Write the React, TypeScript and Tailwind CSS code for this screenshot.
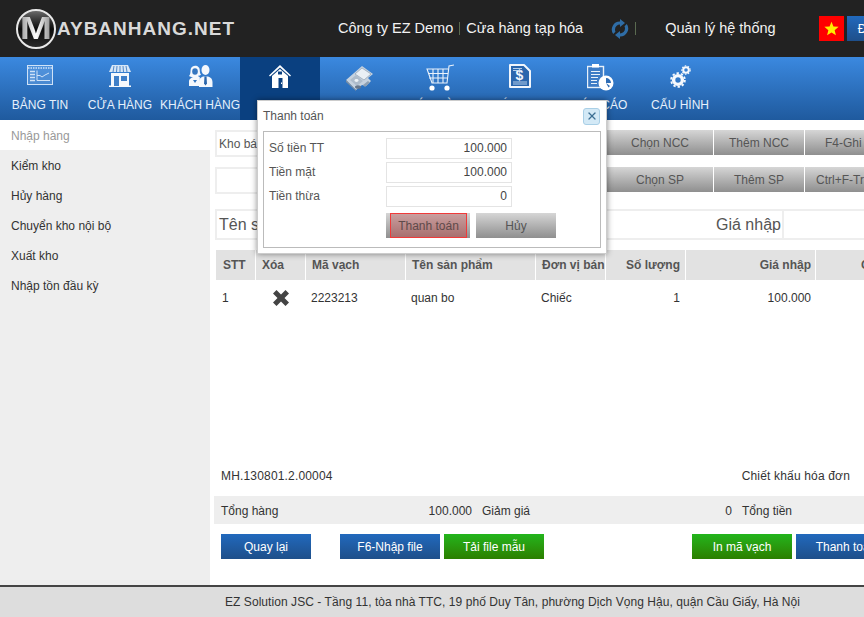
import React from 'react';
import { X } from 'lucide-react';

const font = { fontFamily: '"Liberation Sans", Arial, sans-serif' };

const greyBtn = 'flex h-[25px] items-center justify-center bg-gradient-to-b from-[#d6d6d6] to-[#8f8f8f] text-xs text-[#555]';
const blueBtn = 'flex h-[25px] items-center justify-center bg-gradient-to-b from-[#2169bd] to-[#1e4f8a] text-xs text-white';
const greenBtn = 'flex h-[25px] items-center justify-center bg-gradient-to-b from-[#22b51c] to-[#2b7f00] text-xs text-white';

const IconBoard = () => (
  <svg width="26" height="20" viewBox="0 0 26 20" fill="none" stroke="#cfe2f7" strokeWidth="1">
    <rect x="0.500" y="0.500" width="25" height="19" fill="#7fb2ea" fillOpacity="0.35" />
    <path d="M1 3h24" strokeWidth="1.500" strokeDasharray="1.500 1" />
    <path d="M3 6.500h5M3 9.500h5M3 12.500h5M3 15.500h5" strokeWidth="1.300" />
    <path d="M10 5.500v10M10 10.500h3l2 1.500 3-2 4-2M10 15.500h13" />
  </svg>
);

const IconStore = () => (
  <svg width="22" height="22" viewBox="0 0 22 22" fill="#f4f8fd">
    <path d="M3 0h16l3 7H0z" fill="#d7e6f6" />
    <path d="M5 1 4 7M8 1l-.500 6M11 1v6M14 1l.500 6M17 1l1 6" stroke="#4f88c9" strokeWidth="1" />
    <path d="M2 8h18v13H2z" />
    <path d="M0 20.500h22V22H0z" />
    <path d="M5 11h5v10H5z" fill="#3f7fc8" />
    <path d="M12 11h6v5h-6z" fill="#3f7fc8" />
  </svg>
);

const IconCustomers = () => (
  <svg width="25" height="22" viewBox="0 0 25 22">
    <path d="M7 0.800c3 0 5 2 4.800 5 0 2 .7 3 1.200 4-1 1-2 1.200-3 1 .2.700 1 1 1.800 1.400V21H1v-5c0-2 2-3 4-4-1 .2-2.500 0-4-1 1-1 1.500-3 1.500-5C2.500 3 4 .8 7 .8z" fill="#f4f8fd" />
    <ellipse cx="7" cy="6.500" rx="2.800" ry="3.200" fill="#3476c0" />
    <path d="M5 15h4l-2 3z" fill="#3476c0" />
    <ellipse cx="17.500" cy="5" rx="4" ry="5" fill="#f4f8fd" />
    <path d="M11 22v-5c0-3 2-5 4-5.500h5c2.500.5 4.500 2.500 4.500 5.500v5z" fill="#f4f8fd" />
    <path d="M16.500 11.500h2l.5 7-1.500 2-1.500-2z" fill="#2b66ab" />
  </svg>
);

const IconHome = () => (
  <svg width="22" height="23" viewBox="0 0 22 23" fill="#fff">
    <path d="M11 0 0 10.500l1 1L11 2.500l10 9 1-1z" />
    <path d="M11 4 3 11v12h16V11z" />
    <path d="M9.500 13h4v10h-4z" fill="#0a4080" />
    <path d="M9 6.500h4v3H9z" fill="#0a4080" />
    <path d="M12 17.500h1v1.500h-1z" fill="#fff" />
  </svg>
);

const IconMoney = () => (
  <svg width="29" height="27" viewBox="0 0 29 27">
    <path d="M0 15 16 1l11 8-5 4 3 3-5 5-4-1-6 5z" fill="#c6d2df" />
    <path d="M0 15v2l10 9v-1z" fill="#7f8f9f" />
    <path d="M16 3l9 6-7 6-9-6z" fill="#e9eff5" stroke="#8fa1b3" strokeWidth="0.700" />
    <path d="M4 15l6-5 7 6-6 5z" fill="#aebccb" />
    <path d="M17 20l5-4 2 1.500-5 4.500z" fill="#8ea0b2" />
    <ellipse cx="12" cy="22" rx="3" ry="1.800" fill="#68778a" />
    <ellipse cx="10.500" cy="15.500" rx="2" ry="1.400" fill="#eef3f8" />
  </svg>
);

const IconCart = () => (
  <svg width="28" height="27" viewBox="0 0 28 27" fill="none" stroke="#eaf2fb" strokeWidth="1.100">
    <path d="M28 1l-5 1-2 17H6L1 5h21" />
    <path d="M2 9.500h20M3 14h18M7 5v14M12 5v14M17 5v14" />
    <circle cx="6" cy="24" r="2.600" fill="#fff" stroke="none" />
    <circle cx="21" cy="24" r="2.600" fill="#fff" stroke="none" />
  </svg>
);

const IconInvoice = () => (
  <svg width="22" height="24" viewBox="0 0 22 24">
    <path d="M1 1h14l6 6v16H1z" fill="#2a66ad" stroke="#f1f6fc" strokeWidth="2" strokeLinejoin="round" />
    <text x="10.500" y="15.500" textAnchor="middle" fontSize="14" fontWeight="700" fill="#f1f6fc" style={font}>$</text>
    <path d="M4 4.500h9M4 6.500h9M4 18h14M4 20h14" stroke="#c5daf1" strokeWidth="0.900" />
  </svg>
);

const IconReport = () => (
  <svg width="27" height="27" viewBox="0 0 27 27">
    <rect x="0.500" y="2.500" width="16" height="21" fill="#3d7cc6" stroke="#e8f1fa" strokeWidth="1.400" />
    <rect x="5" y="0" width="7" height="3.500" fill="#fff" />
    <path d="M4 7.500h9M4 10.500h9M4 13.500h7M4 16.500h6M4 19.500h6" stroke="#e8f1fa" strokeWidth="1.100" />
    <circle cx="19" cy="19" r="7.500" fill="#fff" />
    <path d="M19 19v-5a5 5 0 0 1 5 5zM19 19l4 3-1.500 1.500z" fill="#2f6db5" />
  </svg>
);

const IconGears = () => (
  <svg width="21" height="23" viewBox="0 0 21 23" fill="none" stroke="#f6f9fd">
    <circle cx="8" cy="15" r="4.400" strokeWidth="3.400" />
    <circle cx="8" cy="15" r="6.900" strokeWidth="1.800" strokeDasharray="2.400 2" />
    <circle cx="16" cy="5" r="2.800" strokeWidth="2" />
    <circle cx="16" cy="5" r="4.200" strokeWidth="1.100" strokeDasharray="1.500 1.500" />
  </svg>
);

const navItems: { label: string; icon: React.ReactNode; active?: boolean; top: string }[] = [
  { label: 'BẢNG TIN', icon: <IconBoard />, top: 'pt-[8px]' },
  { label: 'CỬA HÀNG', icon: <IconStore />, top: 'pt-[8px]' },
  { label: 'KHÁCH HÀNG', icon: <IconCustomers />, top: 'pt-[8px]' },
  { label: 'KHO', icon: <IconHome />, active: true, top: 'pt-[8px]' },
  { label: 'THU CHI', icon: <IconMoney />, top: 'pt-[8px]' },
  { label: 'BÁN HÀNG', icon: <IconCart />, top: 'pt-[7px]' },
  { label: 'HÓA ĐƠN', icon: <IconInvoice />, top: 'pt-[7px]' },
  { label: 'BÁO CÁO', icon: <IconReport />, top: 'pt-[7px]' },
  { label: 'CẤU HÌNH', icon: <IconGears />, top: 'pt-[8px]' },
];

const sideItems = ['Kiểm kho', 'Hủy hàng', 'Chuyển kho nội bộ', 'Xuất kho', 'Nhập tồn đầu kỳ'];

const cols = [
  { label: 'STT', w: 'w-[39px]', cls: 'pl-[7px]' },
  { label: 'Xóa', w: 'w-[49px]', cls: 'pl-[6px]' },
  { label: 'Mã vạch', w: 'w-[99px]', cls: 'pl-[6px]' },
  { label: 'Tên sản phẩm', w: 'w-[129px]', cls: 'pl-[6px]' },
  { label: 'Đơn vị bán', w: 'w-[69px]', cls: 'pl-[6px]' },
  { label: 'Số lượng', w: 'w-[79px]', cls: 'justify-end pr-[5px]' },
  { label: 'Giá nhập', w: 'w-[129px]', cls: 'justify-end pr-[4px]' },
  { label: 'Chiết khấu', w: 'w-[100px]', cls: 'pl-[45px]' },
];

const Logo = () => (
  <div className="flex w-[322px] shrink-0 items-center">
    <div className="flex h-[40px] w-[40px] shrink-0 items-center justify-center rounded-full border-2 border-[#e8e8e8] bg-gradient-to-b from-[#6a6a6a] via-[#0c0c0c] to-[#2a2a2a]">
      <span className="scale-x-125 bg-gradient-to-r from-[#9a9a9a] via-white to-[#8a8a8a] bg-clip-text text-[31px] leading-none font-bold text-transparent">M</span>
    </div>
    <span className="ml-[1px] text-[19px] leading-none font-bold tracking-[1px] whitespace-nowrap text-[#d9d9d9]">AYBANHANG.NET</span>
  </div>
);

const PayField = ({ label, value }: { label: string; value: string }) => (
  <div className="flex h-[24px] items-center">
    <span className="w-[117px] text-xs text-[#555]">{label}</span>
    <div className="flex h-[21px] w-[126px] items-center justify-end border border-[#e4e4e4] px-[4px] text-xs text-[#444]">{value}</div>
  </div>
);

const PayDialog = () => (
  <div className="absolute top-[100px] left-[257px] h-[154px] w-[350px] border border-[#ccc] bg-white shadow-[0_0_6px_rgba(0,0,0,0.45)]">
    <div className="flex h-[30px] items-center justify-between pr-[6px] pl-[5px]">
      <span className="text-xs text-[#555]">Thanh toán</span>
      <div className="flex h-[17px] w-[17px] items-center justify-center rounded-[3px] border border-[#a9cfe6] bg-[#d3e9f6]">
        <X size={12} strokeWidth={2.5} className="text-[#3d6f93]" />
      </div>
    </div>
    <div className="mx-[5px] h-[117px] border border-[#bbb] px-[5px] pt-[4px]">
      <PayField label="Số tiền TT" value="100.000" />
      <PayField label="Tiền mặt" value="100.000" />
      <PayField label="Tiền thừa" value="0" />
      <div className="mt-[5px] ml-[117px] flex gap-[6px]">
        <div className="flex h-[25px] w-[84px] bg-gradient-to-b from-[#d6d6d6] to-[#8f8f8f] pr-[3px] pl-[4px]">
          <div className="flex h-[25px] w-[77px] items-center justify-center border border-[#f03a3a] bg-gradient-to-b from-[#c99f9f] to-[#a86f6f] text-xs text-[#5e4a4a]">Thanh toán</div>
        </div>
        <div className={`${greyBtn} w-[80px]`}>Hủy</div>
      </div>
    </div>
  </div>
);

export default function App() {
  return (
    <div className="relative flex h-[617px] w-[864px] flex-col overflow-hidden bg-white" style={font}>
      <header className="flex h-[57px] shrink-0 items-center bg-[#222] pl-[16px]">
        <Logo />
        <div className="flex shrink-0 items-center text-[14.5px] whitespace-nowrap text-[#f2f2f2]">
          <span>Công ty EZ Demo</span>
          <span className="mx-[6px] h-[13px] w-px bg-[#5a6a50]" />
          <span>Cửa hàng tạp hóa</span>
          <svg width="18" height="20" viewBox="0 0 18 20" fill="#2f6da6" className="ml-[28px]">
            <path d="M9 2.500V0l5 4-5 4V5.500a5 5 0 0 0-5 5c0 .8.200 1.600.500 2.300L2.200 15A8 8 0 0 1 9 2.500z" />
            <path d="M9 17.500V20l-5-4 5-4v2.500a5 5 0 0 0 5-5c0-.8-.200-1.600-.500-2.300L15.800 5A8 8 0 0 1 9 17.500z" />
          </svg>
          <span className="ml-[6px] h-[13px] w-px bg-[#5a6a50]" />
          <span className="ml-[29px]">Quản lý hệ thống</span>
        </div>
        <div className="ml-[43px] flex h-[25px] w-[25px] shrink-0 items-center justify-center bg-[#f00]">
          <svg width="15" height="15" viewBox="0 0 20 20" fill="#ffee00">
            <path d="m10 1 2.600 6.300 6.900.500-5.300 4.400 1.700 6.700L10 15.300l-5.900 3.600 1.700-6.700L.5 7.800l6.900-.500z" />
          </svg>
        </div>
        <div className="ml-[3px] flex h-[25px] w-[80px] shrink-0 items-center bg-gradient-to-b from-[#2169bd] to-[#1e4f8a] pl-[11px] text-xs whitespace-nowrap text-white">Đăng xuất</div>
      </header>

      <nav className="flex h-[63px] shrink-0 bg-gradient-to-b from-[#3b89e0] to-[#1f5a9e]">
        {navItems.map((item) => (
          <div key={item.label} className={`flex h-full w-[80px] shrink-0 flex-col items-center ${item.active ? 'bg-[#0a4080]' : ''}`}>
            <div className={`flex h-[40px] items-start justify-center ${item.top}`}>{item.icon}</div>
            <span className="text-xs whitespace-nowrap text-[#e6f0fb]">{item.label}</span>
          </div>
        ))}
      </nav>

      <div className="flex min-h-0 flex-1">
        <aside className="flex w-[210px] shrink-0 flex-col bg-[#eee] text-xs">
          <div className="flex h-[30px] items-center bg-white pt-px pl-[11px] text-[#999]">Nhập hàng</div>
          {sideItems.map((s) => (
            <div key={s} className="flex h-[30px] items-center pt-px pl-[11px] text-[#333]">{s}</div>
          ))}
        </aside>

        <main className="min-w-0 flex-1 overflow-hidden pt-[10px] pl-[5px]">
          <div className="flex w-[700px] items-start">
            <div className="flex h-[27px] w-[392px] items-center border-2 border-[#eee] pl-[2px] text-xs text-[#555]">Kho bán</div>
            <div className={`${greyBtn} w-[106px]`}>Chọn NCC</div>
            <div className={`${greyBtn} ml-px w-[90px]`}>Thêm NCC</div>
            <div className={`${greyBtn} ml-px w-[90px] shrink-0 justify-start pl-[20px]`}>F4-Ghi</div>
          </div>
          <div className="mt-[10px] flex w-[700px] items-start">
            <div className="h-[27px] w-[392px] border-2 border-[#eee]" />
            <div className={`${greyBtn} w-[106px]`}>Chọn SP</div>
            <div className={`${greyBtn} ml-px w-[90px]`}>Thêm SP</div>
            <div className={`${greyBtn} ml-px w-[90px] shrink-0 justify-start pl-[11px] whitespace-nowrap`}>Ctrl+F-Tr</div>
          </div>
          <div className="mt-[15px] flex h-[31px] w-[700px] border-2 border-[#eee]">
            <div className="flex w-[499px] items-center pl-[2px] text-base text-[#555]">Tên sản phẩm</div>
            <div className="flex w-[66px] items-center text-base whitespace-nowrap text-[#555]">Giá nhập</div>
            <div className="w-[80px] border-l-2 border-[#eee]" />
          </div>

          <div className="mt-[10px] flex w-[720px] gap-px pl-px">
            {cols.map((c) => (
              <div key={c.label} className={`${c.w} flex h-[30px] shrink-0 items-center bg-[#e2e2e2] text-xs font-bold whitespace-nowrap text-[#555] ${c.cls}`}>{c.label}</div>
            ))}
          </div>
          <div className="flex h-[35px] w-[720px] items-center gap-px pl-px text-xs text-[#333]">
            <div className="w-[39px] shrink-0 pl-[6px]">1</div>
            <div className="flex w-[49px] shrink-0 justify-center">
              <svg width="16" height="16" viewBox="0 0 16 16" fill="#444"><path d="M3.500 0 8 4.500 12.500 0 16 3.500 11.500 8l4.500 4.500-3.500 3.500L8 11.500 3.500 16 0 12.500 4.500 8 0 3.500z" /></svg>
            </div>
            <div className="w-[99px] shrink-0 pl-[5px]">2223213</div>
            <div className="w-[129px] shrink-0 pl-[5px]">quan bo</div>
            <div className="w-[69px] shrink-0 pl-[5px]">Chiếc</div>
            <div className="w-[79px] shrink-0 pr-[5px] text-right">1</div>
            <div className="w-[129px] shrink-0 pr-[4px] text-right">100.000</div>
          </div>

          <div className="mt-[146px] flex h-[30px] w-[654px] items-center justify-between pr-[19px] pl-[6px] text-xs tracking-[0.17px] text-[#333]">
            <span>MH.130801.2.00004</span>
            <span>Chiết khấu hóa đơn</span>
          </div>
          <div className="mt-[5px] -ml-px flex h-[28px] w-[660px] items-center bg-[#eee] pt-px text-xs text-[#333]">
            <span className="w-[213px] pl-[7px]">Tổng hàng</span>
            <span className="w-[45px] text-right">100.000</span>
            <span className="ml-[10px] w-[60px]">Giảm giá</span>
            <span className="w-[190px] text-right">0</span>
            <span className="ml-[10px]">Tổng tiền</span>
          </div>
          <div className="mt-[10px] flex w-[700px] pl-[6px]">
            <div className={`${blueBtn} w-[90px]`}>Quay lại</div>
            <div className={`${blueBtn} ml-[29px] w-[100px]`}>F6-Nhập file</div>
            <div className={`${greenBtn} ml-[4px] w-[100px]`}>Tải file mẫu</div>
            <div className={`${greenBtn} ml-[148px] w-[100px]`}>In mã vạch</div>
            <div className={`${blueBtn} ml-[4px] w-[100px]`}>Thanh toán</div>
          </div>
        </main>
      </div>

      <footer className="flex h-[32px] shrink-0 items-center border-t-2 border-[#444] bg-[#ddd] pl-[225px] text-xs tracking-[0.06px] whitespace-nowrap text-[#333]">
        EZ Solution JSC - Tầng 11, tòa nhà TTC, 19 phố Duy Tân, phường Dịch Vọng Hậu, quận Cầu Giấy, Hà Nội
      </footer>

      <PayDialog />
    </div>
  );
}
